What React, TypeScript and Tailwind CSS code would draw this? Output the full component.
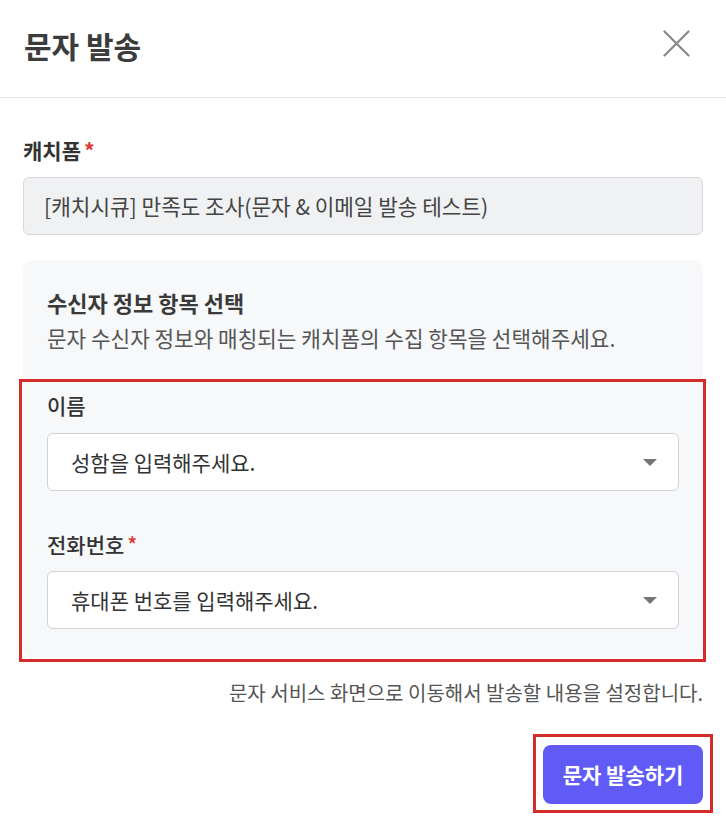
import React from "react";

const font = { fontFamily: '"Noto Sans CJK KR", "Noto Sans", sans-serif' };

function Caret() {
  return (
    <svg width="14" height="7" viewBox="0 0 14 7" className="shrink-0">
      <path d="M0 0 L14 0 L7 7 Z" fill="#757575" />
    </svg>
  );
}

function SelectBox({ placeholder }: { placeholder: string }) {
  return (
    <div className="flex h-[58px] items-center justify-between rounded-[6px] border border-[#cfd2d6] bg-white pl-[23px] pr-[21px]">
      <span className="text-[21px] leading-[26px] text-[#333]">{placeholder}</span>
      <Caret />
    </div>
  );
}

export default function App() {
  return (
    <div className="h-[830px] w-[726px] bg-white" style={font}>
      <div className="flex h-[98px] items-start justify-between border-b border-[#e4e4e4] pl-[24px] pr-[36px] pt-[25px]">
        <h1 className="text-[30px] font-bold leading-[40px] text-[#3c3c3c]">문자 발송</h1>
        <svg width="27" height="27" viewBox="0 0 27 27" className="mt-[5px]">
          <path d="M1.5 1.5 L25.5 25.5 M25.5 1.5 L1.5 25.5" stroke="#888" strokeWidth="2.2" strokeLinecap="round" />
        </svg>
      </div>

      <div className="flex flex-col px-[23px] pt-[40px]">
        <label className="text-[21px] font-semibold leading-[24px] text-[#333]">
          캐치폼<span className="ml-[3px] text-[#e0342f]">*</span>
        </label>
        <div className="mt-[15px] flex h-[58px] items-center rounded-[6px] border border-[#d6d8db] bg-[#eff1f3] px-[20px]">
          <span className="text-[21.3px] leading-[26px] text-[#444]">
            [캐치시큐] 만족도 조사(문자 &amp; 이메일 발송 테스트)
          </span>
        </div>

        <div className="relative mt-[25px] flex flex-col rounded-[10px] bg-[#f7f8fa] px-[24px] pb-[29px] pt-[30px]">
          <div className="text-[22px] font-bold leading-[24px] text-[#3a3a3a]">수신자 정보 항목 선택</div>
          <div className="mt-[11px] text-[21.3px] leading-[26px] text-[#555]">
            문자 수신자 정보와 매칭되는 캐치폼의 수집 항목을 선택해주세요.
          </div>

          <div className="mt-[42px] flex flex-col">
            <label className="text-[21px] font-medium leading-[24px] text-[#333]">이름</label>
            <div className="mt-[16px]">
              <SelectBox placeholder="성함을 입력해주세요." />
            </div>
            <label className="mt-[41px] text-[21px] font-medium leading-[24px] text-[#333]">
              전화번호<span className="ml-[3px] text-[#e0342f]">*</span>
            </label>
            <div className="mt-[15px]">
              <SelectBox placeholder="휴대폰 번호를 입력해주세요." />
            </div>
          </div>

          <div className="pointer-events-none absolute -bottom-[4px] -left-[4px] -right-[3px] top-[119px] border-[3px] border-[#d42b2b]" />
        </div>

        <div className="mt-[24px] text-right text-[20px] leading-[22px] text-[#555]">
          문자 서비스 화면으로 이동해서 발송할 내용을 설정합니다.
        </div>

        <div className="mt-[41px] flex justify-end">
          <div className="relative">
            <button className="flex h-[59px] w-[160px] items-center justify-center rounded-[8px] bg-[#605af7] text-[21px] font-bold text-white">
              문자 발송하기
            </button>
            <div className="pointer-events-none absolute -bottom-[9px] -left-[10px] -right-[10px] -top-[11px] border-[3px] border-[#d42b2b]" />
          </div>
        </div>
      </div>
    </div>
  );
}
